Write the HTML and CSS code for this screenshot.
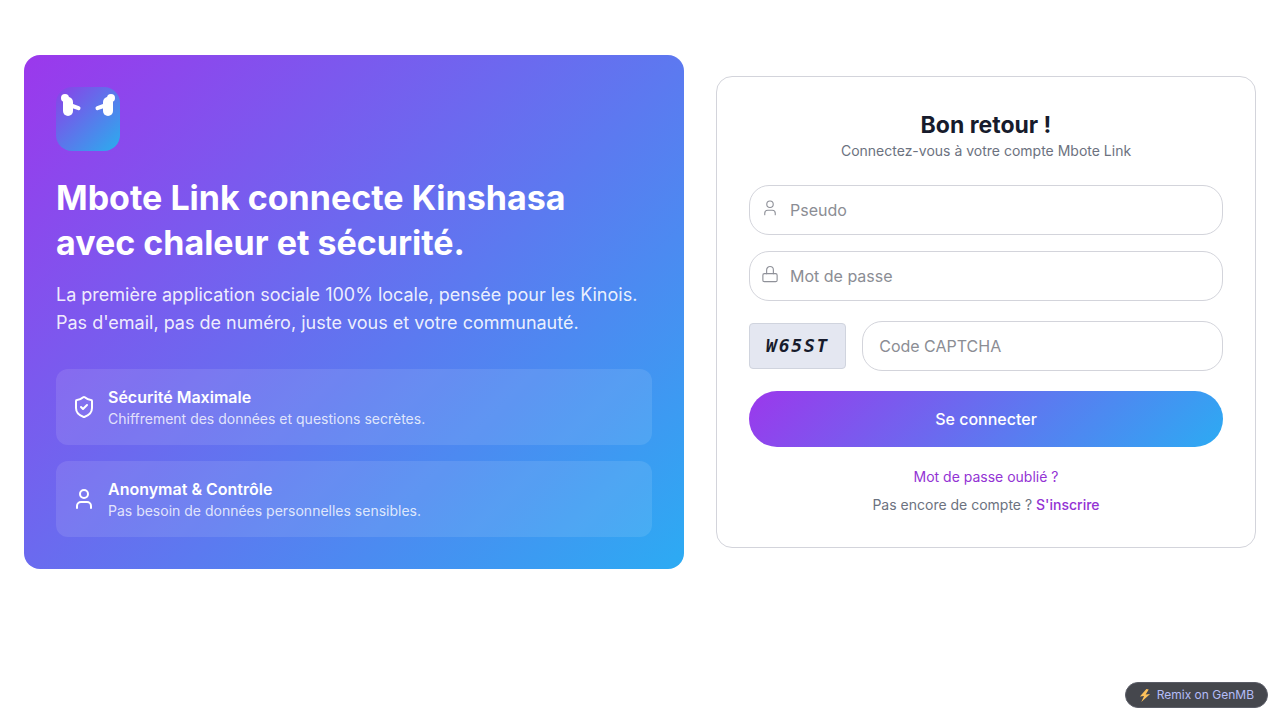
FILE: index.html
```html
<!DOCTYPE html>
<html lang="fr">
<head>
<meta charset="utf-8">
<meta name="viewport" content="width=device-width, initial-scale=1">
<title>Mbote Link</title>
<link rel="stylesheet" href="styles.css">
</head>
<body>
<main class="layout">
  <section class="hero">
    <svg class="logo" viewBox="0 0 64 64" role="img" aria-label="Mbote Link">
      <defs>
        <linearGradient id="logo-fill" x1="0" y1="0" x2="1" y2="1">
          <stop offset="0" stop-color="#8c3fe8"/>
          <stop offset="1" stop-color="#2aaeee"/>
        </linearGradient>
      </defs>
      <rect width="64" height="64" rx="16" fill="url(#logo-fill)"/>
      <g fill="#fff" stroke="#fff" stroke-linecap="round">
        <circle cx="9" cy="11" r="4" stroke="none"/>
        <rect x="7" y="10" width="10" height="19" rx="5" stroke="none"/>
        <path d="M15 18.500 L22.500 21.200" stroke-width="4"/>
        <circle cx="55" cy="11" r="4" stroke="none"/>
        <rect x="47" y="10" width="10" height="19" rx="5" stroke="none"/>
        <path d="M49 18.500 L41.500 21.200" stroke-width="4"/>
      </g>
    </svg>
    <h1 class="hero-title">Mbote Link connecte Kinshasa avec chaleur et sécurité.</h1>
    <p class="hero-text">La première application sociale 100% locale, pensée pour les Kinois. Pas d'email, pas de numéro, juste vous et votre communauté.</p>
    <ul class="features">
      <li class="feature">
        <svg class="icon" viewBox="0 0 24 24" aria-hidden="true"><path d="M20 13c0 5-3.500 7.500-7.660 8.950a1 1 0 0 1-.67-.01C7.500 20.500 4 18 4 13V6a1 1 0 0 1 1-1c2 0 4.500-1.200 6.240-2.720a1.170 1.170 0 0 1 1.520 0C14.510 3.810 17 5 19 5a1 1 0 0 1 1 1z"/><path d="m9 12 2 2 4-4"/></svg>
        <div>
          <h2 class="feature-title">Sécurité Maximale</h2>
          <p class="feature-text">Chiffrement des données et questions secrètes.</p>
        </div>
      </li>
      <li class="feature">
        <svg class="icon" viewBox="0 0 24 24" aria-hidden="true"><path d="M19 21v-2a4 4 0 0 0-4-4H9a4 4 0 0 0-4 4v2"/><circle cx="12" cy="7" r="4"/></svg>
        <div>
          <h2 class="feature-title">Anonymat &amp; Contrôle</h2>
          <p class="feature-text">Pas besoin de données personnelles sensibles.</p>
        </div>
      </li>
    </ul>
  </section>

  <section class="login">
    <header class="login-header">
      <h2 class="login-title">Bon retour !</h2>
      <p class="login-subtitle">Connectez-vous à votre compte Mbote Link</p>
    </header>
    <form class="form">
      <div class="fields">
        <label class="field">
          <svg class="field-icon" viewBox="0 0 24 24" aria-hidden="true"><path d="M19 21v-2a4 4 0 0 0-4-4H9a4 4 0 0 0-4 4v2"/><circle cx="12" cy="7" r="4.300"/></svg>
          <input class="input input-with-icon" type="text" placeholder="Pseudo" aria-label="Pseudo">
        </label>
        <label class="field">
          <svg class="field-icon" viewBox="0 0 24 24" aria-hidden="true"><rect x="2.500" y="11.500" width="19" height="10.700" rx="2"/><path d="M7.500 11.500V6.500a4.500 4.500 0 0 1 9 0v5"/></svg>
          <input class="input input-with-icon" type="password" placeholder="Mot de passe" aria-label="Mot de passe">
        </label>
      </div>
      <div class="captcha">
        <span class="captcha-code">W65ST</span>
        <input class="input" type="text" placeholder="Code CAPTCHA" aria-label="Code CAPTCHA">
      </div>
      <button class="submit" type="submit">Se connecter</button>
    </form>
    <footer class="links">
      <a class="link" href="#">Mot de passe oublié ?</a>
      <p class="signup">Pas encore de compte ? <a class="link" href="#">S'inscrire</a></p>
    </footer>
  </section>
</main>
<a class="remix" href="#">
  <svg class="bolt" viewBox="0 0 12 14" aria-hidden="true"><path d="M7.500 0 0.500 8 5 7.500 2 14 11.500 5.300 6.700 5.800 10 0.500z" fill="#fcc05a"/></svg>
  Remix on GenMB
</a>
</body>
</html>
```

FILE: styles.css
```css
*, *::before, *::after { box-sizing: border-box; }
h1, h2, p, ul { margin: 0; padding: 0; }

body {
  margin: 0;
  min-height: 100vh;
  display: flex;
  align-items: center;
  justify-content: center;
  padding: 24px 24px 120px;
  background: #fff;
  color: #171b2c;
  font-family: Inter, "Liberation Sans", sans-serif;
  font-size: 16px;
  line-height: 24px;
}

.layout {
  width: 100%;
  max-width: 1232px;
  display: grid;
  grid-template-columns: 11fr 9fr;
  gap: 32px;
  align-items: center;
}

.hero {
  padding: 32px;
  border-radius: 16px;
  background: linear-gradient(135deg, #9b38ec, #2cabf3);
  color: #fff;
}
.logo { display: block; width: 64px; height: 64px; margin-bottom: 24px; }
.hero-title {
  font-size: 34px;
  line-height: 45px;
  font-weight: 700;
  margin-bottom: 16px;
}
.hero-text { font-size: 18px; line-height: 28px; color: rgba(255, 255, 255, 0.9); }

.features { list-style: none; margin-top: 32px; display: grid; gap: 16px; }
.feature {
  display: flex;
  align-items: center;
  gap: 12px;
  padding: 16px;
  border-radius: 12px;
  background: rgba(255, 255, 255, 0.1);
}
.icon, .field-icon {
  fill: none;
  stroke: currentColor;
  stroke-width: 2;
  stroke-linecap: round;
  stroke-linejoin: round;
}
.icon { width: 24px; height: 24px; flex: none; }
.feature-title { font-size: 16px; line-height: 24px; font-weight: 600; }
.feature-text { font-size: 14px; line-height: 20px; color: rgba(255, 255, 255, 0.8); }

.login {
  padding: 32px;
  border: 1px solid #d3d4db;
  border-radius: 16px;
  background: #fff;
}
.login-header { text-align: center; margin-bottom: 24px; }
.login-title { font-size: 23px; line-height: 32px; font-weight: 700; }
.login-subtitle, .links { font-size: 14px; line-height: 20px; color: #6c7280; }

.form { display: grid; gap: 20px; }
.fields { display: grid; gap: 16px; }
.field { display: block; position: relative; }
.field-icon {
  position: absolute;
  left: 12px;
  top: 14px;
  width: 18px;
  height: 18px;
  color: #8f9199;
  stroke-width: 1.5;
}
.input {
  display: block;
  width: 100%;
  min-width: 0;
  height: 50px;
  padding: 12px 16px;
  border: 1px solid #d3d4db;
  border-radius: 20px;
  background: #fff;
  color: #171b2c;
  font: inherit;
}
.input::placeholder { color: #8b8d94; opacity: 1; }
.input-with-icon { padding-left: 40px; }

.captcha { display: flex; align-items: center; gap: 16px; }
.captcha-code {
  flex: none;
  padding: 8px 16px;
  border: 1px solid #d0d4de;
  border-radius: 4px;
  background: #e4e7f1;
  font: italic 700 18px/28px "DejaVu Sans Mono", monospace;
  letter-spacing: 0.1em;
}

.submit {
  height: 56px;
  border: 0;
  border-radius: 28px;
  background: linear-gradient(135deg, #9b38ec, #2cabf3);
  color: #fff;
  font: inherit;
  font-weight: 500;
  cursor: pointer;
}
.links { display: grid; gap: 8px; justify-items: center; margin-top: 20px; }
.link { color: #9333d4; text-decoration: none; }
.signup .link { font-weight: 500; }

.remix {
  position: fixed;
  right: 12px;
  bottom: 12px;
  display: flex;
  align-items: center;
  gap: 6px;
  padding: 4px 13px;
  border: 1px solid #5a5c66;
  border-radius: 13px;
  background: #45474d;
  color: #b4bcf8;
  font-size: 12px;
  line-height: 16px;
  text-decoration: none;
}
.bolt { width: 12px; height: 13px; }
```
